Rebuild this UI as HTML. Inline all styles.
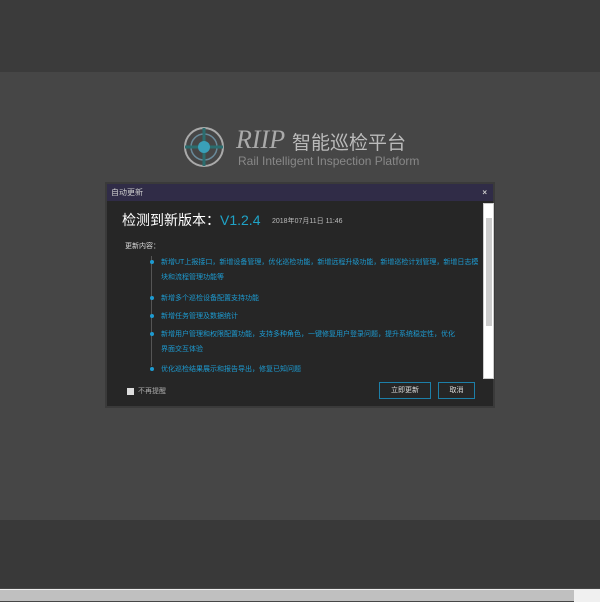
<!DOCTYPE html>
<html><head><meta charset="utf-8"><style>
*{margin:0;padding:0;box-sizing:border-box}
body{width:600px;height:601px;overflow:hidden;background:#464646;font-family:"Liberation Sans","Noto Sans CJK SC",sans-serif;position:relative}
.top{position:absolute;left:0;top:0;width:600px;height:72px;background:#3b3b3b}
.bot{position:absolute;left:0;top:520px;width:600px;height:68px;background:#393939}
.sb{position:absolute;left:0;top:589px;width:600px;height:12px;background:#c0c0c0;border-top:1px solid #eee}
.sb i{position:absolute;right:0;top:0;width:26px;height:12px;background:#f0f0f0}
.dlg{position:absolute;left:105px;top:182px;width:390px;height:226px;background:#262626;border:2px solid #3a3a3a}
.tb{height:17px;background:#302c47;color:#ccc;font-size:8px;line-height:17px;padding-left:4px;position:relative}
.tb b{position:absolute;right:6px;top:0;color:#ccc;font-size:8px}
.vsb{position:absolute;left:376px;top:19px;width:11px;height:176px;background:#fff;border:1px solid #ccc}
.vsb i{position:absolute;left:2px;top:14px;width:6px;height:108px;background:#ccc}
h1{position:absolute;left:15px;top:26px;font-size:14px;color:#fff;font-weight:normal}
h1 span{color:#1fa3c7}
.dt{position:absolute;left:165px;top:32px;font-size:7px;color:#bbb}
.c{position:absolute;left:18px;top:57px;font-size:7px;color:#ddd}
.l{position:absolute;left:54px;font-size:7px;color:#1d9bd1;line-height:15px;width:322px}
.d{position:absolute;left:43px;width:4px;height:4px;border-radius:50%;background:#1d9bd1}
.vl{position:absolute;left:44px;top:72px;width:1px;height:110px;background:#555}
.cb{position:absolute;left:20px;top:204px;width:7px;height:7px;background:#ddd}
.ct{position:absolute;left:31px;top:202px;font-size:7px;color:#aaa}
.btn{position:absolute;top:198px;height:17px;border:1px solid #1d7fa8;color:#ddd;font-size:7px;line-height:15px;text-align:center}
</style></head><body>
<div class="top"></div>
<svg style="position:absolute;left:183px;top:125px" width="46" height="46" viewBox="0 0 46 46">
<circle cx="21" cy="22" r="19" fill="none" stroke="#aaa" stroke-width="2"/>
<circle cx="21" cy="22" r="13" fill="none" stroke="#6a8a9a" stroke-width="1.5"/>
<line x1="21" y1="3" x2="21" y2="41" stroke="#2b6d6f" stroke-width="3"/>
<line x1="2" y1="22" x2="40" y2="22" stroke="#2b6d6f" stroke-width="3"/>
<circle cx="21" cy="22" r="6" fill="#3a9fb8"/>
</svg>
<div style="position:absolute;left:236px;top:125px;font-family:'Liberation Serif',serif;font-style:italic;font-size:26px;color:#aaa">RIIP</div>
<div style="position:absolute;left:292px;top:128px;font-size:19px;color:#bbb">智能巡检平台</div>
<div style="position:absolute;left:238px;top:154px;font-size:12px;color:#888">Rail Intelligent Inspection Platform</div>
<div class="dlg">
<div class="tb">自动更新<b>×</b></div>
<div class="vsb"><i></i></div>
<h1>检测到新版本：<span>V1.2.4</span></h1>
<div class="dt">2018年07月11日 11:46</div>
<div class="c">更新内容：</div>
<div class="vl"></div>
<div class="d" style="top:76px"></div>
<div class="l" style="top:71px">新增UT上报接口，新增设备管理，优化巡检功能，新增远程升级功能，新增巡检计划管理，新增日志模块和流程管理功能等</div>
<div class="d" style="top:112px"></div>
<div class="l" style="top:107px">新增多个巡检设备配置支持功能</div>
<div class="d" style="top:130px"></div>
<div class="l" style="top:125px">新增任务管理及数据统计</div>
<div class="d" style="top:148px"></div>
<div class="l" style="top:143px;width:300px">新增用户管理和权限配置功能，支持多种角色，一键修复用户登录问题，提升系统稳定性，优化界面交互体验</div>
<div class="d" style="top:183px"></div>
<div class="l" style="top:178px">优化巡检结果展示和报告导出，修复已知问题</div>
<div class="cb"></div><div class="ct">不再提醒</div>
<div class="btn" style="left:272px;width:52px">立即更新</div>
<div class="btn" style="left:331px;width:37px">取消</div>
</div>
<div class="bot"></div>
<div class="sb"><i></i></div>
</body></html>
